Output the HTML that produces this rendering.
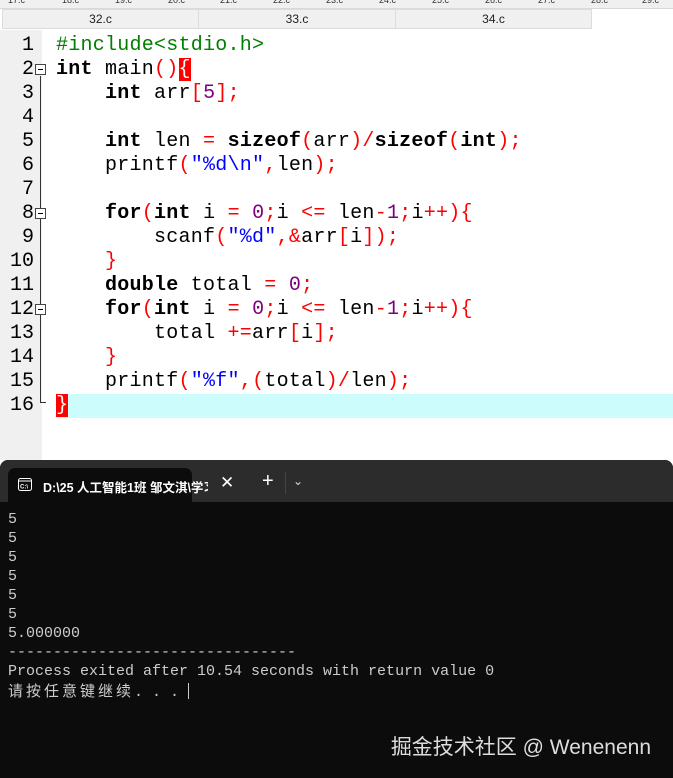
<!DOCTYPE html>
<html><head><meta charset="utf-8"><style>
*{margin:0;padding:0;box-sizing:border-box}
body{width:673px;height:778px;overflow:hidden;background:#fff;position:relative;font-family:"Liberation Mono",monospace}
.tabs1{position:absolute;left:0;top:0;width:673px;height:9px;background:#f0f0f0;border-bottom:1px solid #d8d8d8;font:9px "Liberation Sans",sans-serif;color:#333}
.tabs1 span{position:absolute;top:-5px}
.tabs2{position:absolute;left:0;top:9px;width:673px;height:21px;background:#fff}
.t2{position:absolute;top:0;height:20px;background:#f0f0f0;border:1px solid #dcdcdc;font:12px "Liberation Sans",sans-serif;color:#222;text-align:center;line-height:19px}
.gutter{position:absolute;left:0;top:30px;width:42px;height:430px;background:#f0f0f0}
.fold{position:absolute;left:42px;top:30px;width:14px;height:430px;background:#fff}
.code{position:absolute;left:0;top:34px;width:673px}
.ln{position:absolute;left:0;width:34px;text-align:right;font-size:20px;line-height:24px;color:#000}
.l{position:absolute;left:56px;font-size:20px;line-height:24px;white-space:pre;color:#000;letter-spacing:0.25px}
b{font-weight:bold}
.r{color:#f00}.p{color:#800080}.s{color:#00f}.g{color:#008000}
.hl{position:absolute;left:56px;top:394px;width:617px;height:24px;background:#ccfcfc}
.box{position:absolute;left:35px;width:11px;height:11px;border:1px solid #444;background:#fff}
.box:after{content:"";position:absolute;left:2px;top:4px;width:5px;height:1px;background:#000}
.vl{position:absolute;left:40px;width:1px;background:#333}
.term{position:absolute;left:0;top:460px;width:673px;height:318px;background:#0c0c0c;border-radius:8px 8px 0 0;overflow:hidden}
.bar{position:absolute;left:0;top:0;width:673px;height:42px;background:#2c2c2c}
.tab{position:absolute;left:8px;top:8px;width:184px;height:34px;background:#0c0c0c;border-radius:7px 7px 0 0;color:#fff;font:bold 12.5px "Liberation Sans","Noto Sans CJK SC",sans-serif}
.out{position:absolute;left:8px;top:50px;color:#ccc;font-size:15px;line-height:19px;white-space:pre}
.wm{position:absolute;right:22px;top:731px;color:#ddd;font:21px "Liberation Sans","Noto Sans CJK SC",sans-serif}
</style></head><body>
<div class="tabs1">
<span style="left:8px">17.c</span><span style="left:62px">18.c</span><span style="left:115px">19.c</span><span style="left:168px">20.c</span><span style="left:220px">21.c</span><span style="left:273px">22.c</span><span style="left:326px">23.c</span><span style="left:379px">24.c</span><span style="left:432px">25.c</span><span style="left:485px">26.c</span><span style="left:538px">27.c</span><span style="left:591px">28.c</span><span style="left:642px">29.c</span>
</div>
<div class="tabs2">
<div class="t2" style="left:2px;width:197px">32.c</div>
<div class="t2" style="left:198px;width:198px">33.c</div>
<div class="t2" style="left:395px;width:197px">34.c</div>
</div>
<div class="gutter"></div><div class="fold"></div>
<div class="hl"></div>
<div class="code">
<div class="ln" style="top:0">1</div><div class="ln" style="top:24px">2</div><div class="ln" style="top:48px">3</div><div class="ln" style="top:72px">4</div><div class="ln" style="top:96px">5</div><div class="ln" style="top:120px">6</div><div class="ln" style="top:144px">7</div><div class="ln" style="top:168px">8</div><div class="ln" style="top:192px">9</div><div class="ln" style="top:216px">10</div><div class="ln" style="top:240px">11</div><div class="ln" style="top:264px">12</div><div class="ln" style="top:288px">13</div><div class="ln" style="top:312px">14</div><div class="ln" style="top:336px">15</div><div class="ln" style="top:360px">16</div>
<div class="box" style="top:30px"></div><div class="vl" style="top:42px;height:327px"></div><div style="position:absolute;left:40px;top:368px;width:6px;height:1px;background:#333"></div>
<div class="box" style="top:174px"></div>
<div class="box" style="top:270px"></div>
<div class="l g" style="top:0">#include&lt;stdio.h&gt;</div>
<div class="l" style="top:24px"><b>int</b> main<span class="r">()</span><span style="background:#f00;color:#fff">{</span></div>
<div class="l" style="top:48px">    <b>int</b> arr<span class="r">[</span><span class="p">5</span><span class="r">];</span></div>
<div class="l" style="top:96px">    <b>int</b> len <span class="r">=</span> <b>sizeof</b><span class="r">(</span>arr<span class="r">)/</span><b>sizeof</b><span class="r">(</span><b>int</b><span class="r">);</span></div>
<div class="l" style="top:120px">    printf<span class="r">(</span><span class="s">"%d\n"</span><span class="r">,</span>len<span class="r">);</span></div>
<div class="l" style="top:168px">    <b>for</b><span class="r">(</span><b>int</b> i <span class="r">=</span> <span class="p">0</span><span class="r">;</span>i <span class="r">&lt;=</span> len<span class="r">-</span><span class="p">1</span><span class="r">;</span>i<span class="r">++){</span></div>
<div class="l" style="top:192px">        scanf<span class="r">(</span><span class="s">"%d"</span><span class="r">,&amp;</span>arr<span class="r">[</span>i<span class="r">]);</span></div>
<div class="l r" style="top:216px">    }</div>
<div class="l" style="top:240px">    <b>double</b> total <span class="r">=</span> <span class="p">0</span><span class="r">;</span></div>
<div class="l" style="top:264px">    <b>for</b><span class="r">(</span><b>int</b> i <span class="r">=</span> <span class="p">0</span><span class="r">;</span>i <span class="r">&lt;=</span> len<span class="r">-</span><span class="p">1</span><span class="r">;</span>i<span class="r">++){</span></div>
<div class="l" style="top:288px">        total <span class="r">+=</span>arr<span class="r">[</span>i<span class="r">];</span></div>
<div class="l r" style="top:312px">    }</div>
<div class="l" style="top:336px">    printf<span class="r">(</span><span class="s">"%f"</span><span class="r">,(</span>total<span class="r">)/</span>len<span class="r">);</span></div>
<div class="l" style="top:360px"><span style="background:#f00;color:#fff">}</span></div>
</div>
<div class="term">
<div class="bar"></div>
<div class="tab">
<svg style="position:absolute;left:10px;top:10px" width="14" height="13" viewBox="0 0 14 13"><rect x="0.5" y="0.5" width="13" height="12" rx="2" fill="none" stroke="#fff"/><line x1="0.5" y1="3" x2="13.5" y2="3" stroke="#fff"/><text x="2" y="10.5" font-size="6" fill="#fff" font-family="Liberation Sans">C:\</text></svg>
<span style="position:absolute;left:35px;top:9px;white-space:nowrap;width:165px;overflow:hidden">D:\25 人工智能1班 邹文淇\学习</span>
<span style="position:absolute;left:212px;top:5px;font-size:17px;font-weight:normal">✕</span>
</div>
<span style="position:absolute;left:262px;top:10px;color:#fff;font:20px 'Liberation Sans',sans-serif">+</span>
<div style="position:absolute;left:285px;top:12px;width:1px;height:22px;background:#444"></div>
<span style="position:absolute;left:293px;top:14px;color:#ddd;font:12px 'Liberation Sans',sans-serif">⌄</span>
<div class="out">5
5
5
5
5
5
5.000000
--------------------------------
Process exited after 10.54 seconds with return value 0
<span style="font-family:'Noto Sans CJK SC',sans-serif;letter-spacing:3px">请按任意键继续</span>. . . <span style="display:inline-block;width:1px;height:16px;background:#ccc;vertical-align:-3px"></span></div>
</div>
<div class="wm">掘金技术社区 @ Wenenenn</div>
</body></html>
